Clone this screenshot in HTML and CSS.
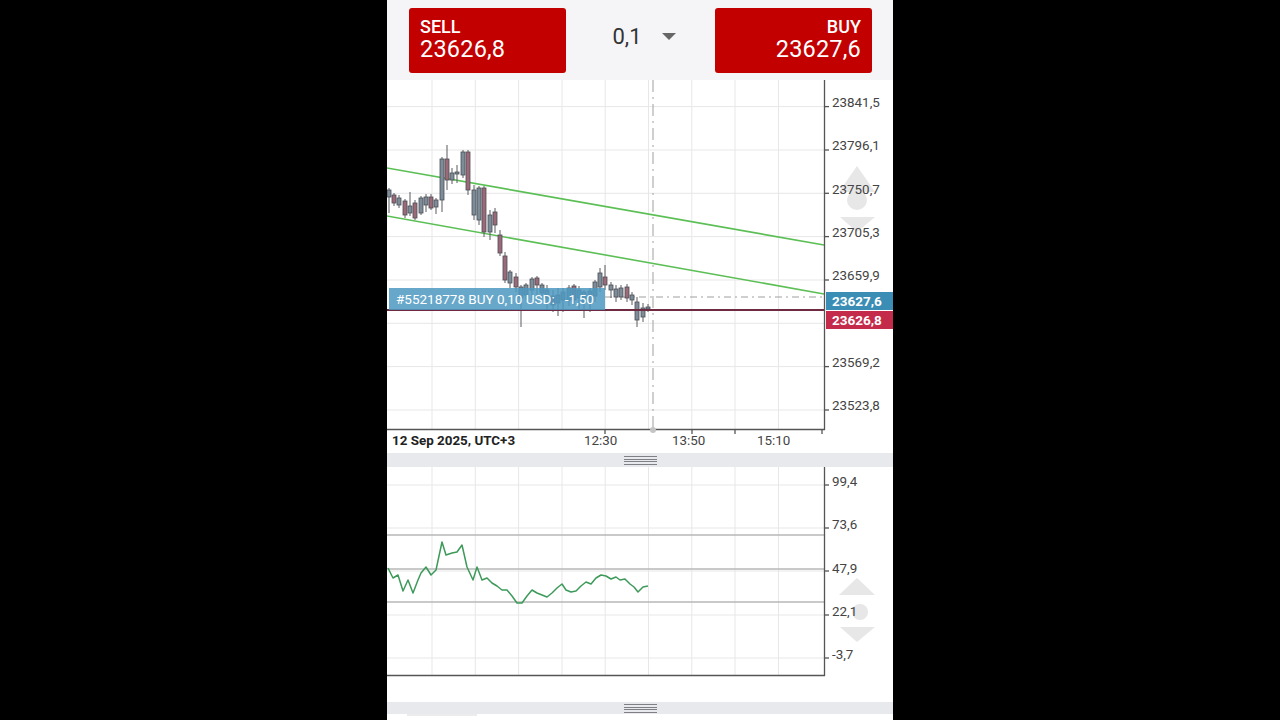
FILE: index.html
```html
<!DOCTYPE html>
<html lang="en">
<head>
<meta charset="utf-8">
<title>Trade chart</title>
<link rel="stylesheet" href="styles.css">
</head>
<body>
<div class="phone">
  <header class="topbar">
    <button class="trade sell"><span class="lbl">SELL</span><span class="px">23626,8</span></button>
    <div class="lot"><span>0,1</span><span class="caret"></span></div>
    <button class="trade buy"><span class="lbl">BUY</span><span class="px">23627,6</span></button>
  </header>

  <section class="chart">
    <svg class="plot" viewBox="387 80 506 373" width="506" height="373">
      <g class="grid">
        <line x1="432" y1="80" x2="432" y2="429"/><line x1="475.3" y1="80" x2="475.3" y2="429"/>
        <line x1="518.6" y1="80" x2="518.6" y2="429"/><line x1="562" y1="80" x2="562" y2="429"/>
        <line x1="605.2" y1="80" x2="605.2" y2="429"/><line x1="648.5" y1="80" x2="648.5" y2="429"/>
        <line x1="691.8" y1="80" x2="691.8" y2="429"/><line x1="735" y1="80" x2="735" y2="429"/>
        <line x1="778.5" y1="80" x2="778.5" y2="429"/>
        <line x1="387" y1="106.6" x2="824" y2="106.6"/><line x1="387" y1="150" x2="824" y2="150"/>
        <line x1="387" y1="193.3" x2="824" y2="193.3"/><line x1="387" y1="236.6" x2="824" y2="236.6"/>
        <line x1="387" y1="280" x2="824" y2="280"/><line x1="387" y1="323.3" x2="824" y2="323.3"/>
        <line x1="387" y1="366.6" x2="824" y2="366.6"/><line x1="387" y1="410" x2="824" y2="410"/>
      </g>
      <g class="ghost">
        <polygon points="857,166 839,192 875,192"/>
        <circle cx="857" cy="200" r="10"/>
        <polygon points="840,217 875,217 857,232"/>
      </g>
      <line class="cross" x1="653" y1="80" x2="653" y2="429"/>
      <line class="trend" x1="387" y1="168" x2="824" y2="245"/>
      <line class="trend" x1="387" y1="216" x2="824" y2="294"/>
      <line class="askline" x1="605" y1="297" x2="824" y2="297"/>
      <g class="candles">
        <line x1="389" y1="188" x2="389" y2="213"/><rect class="u" x="387" y="190" width="4" height="7"/>
        <line x1="394" y1="193" x2="394" y2="206"/><rect class="b" x="392" y="195" width="4" height="8"/>
        <line x1="399" y1="195" x2="399" y2="208"/><rect class="u" x="397" y="198" width="4" height="7"/>
        <line x1="405" y1="199" x2="405" y2="218"/><rect class="b" x="403" y="201" width="4" height="14"/>
        <line x1="410" y1="192" x2="410" y2="216"/><rect class="u" x="408" y="206" width="4" height="7"/>
        <line x1="415" y1="200" x2="415" y2="220"/><rect class="b" x="413" y="203" width="4" height="15"/>
        <line x1="421" y1="196" x2="421" y2="215"/><rect class="u" x="419" y="198" width="4" height="15"/>
        <line x1="426" y1="194" x2="426" y2="212"/><rect class="u" x="424" y="197" width="4" height="8"/>
        <line x1="431" y1="194" x2="431" y2="210"/><rect class="b" x="429" y="197" width="4" height="11"/>
        <line x1="436" y1="198" x2="436" y2="214"/><rect class="u" x="434" y="200" width="4" height="7"/>
        <line x1="442" y1="157" x2="442" y2="212"/><rect class="u" x="440" y="159" width="4" height="41"/>
        <line x1="447" y1="145" x2="447" y2="190"/><rect class="b" x="445" y="159" width="4" height="21"/>
        <line x1="452" y1="168" x2="452" y2="184"/><rect class="u" x="450" y="173" width="4" height="7"/>
        <line x1="457" y1="165" x2="457" y2="183"/><rect class="u" x="455" y="172" width="4" height="2"/>
        <line x1="463" y1="150" x2="463" y2="178"/><rect class="u" x="461" y="152" width="4" height="23"/>
        <line x1="468" y1="150" x2="468" y2="195"/><rect class="b" x="466" y="152" width="4" height="38"/>
        <line x1="474" y1="185" x2="474" y2="220"/><rect class="u" x="472" y="190" width="4" height="25"/>
        <line x1="479" y1="186" x2="479" y2="225"/><rect class="u" x="477" y="188" width="4" height="32"/>
        <line x1="484" y1="186" x2="484" y2="237"/><rect class="b" x="482" y="188" width="4" height="44"/>
        <line x1="490" y1="210" x2="490" y2="240"/><rect class="u" x="488" y="215" width="4" height="17"/>
        <line x1="495" y1="208" x2="495" y2="233"/><rect class="b" x="493" y="212" width="4" height="13"/>
        <line x1="500" y1="230" x2="500" y2="256"/><rect class="b" x="498" y="235" width="4" height="18"/>
        <line x1="505" y1="252" x2="505" y2="283"/><rect class="b" x="503" y="256" width="4" height="24"/>
        <line x1="510" y1="270" x2="510" y2="288"/><rect class="u" x="508" y="272" width="4" height="11"/>
        <line x1="516" y1="273" x2="516" y2="292"/><rect class="b" x="514" y="277" width="4" height="10"/>
        <line x1="521" y1="285" x2="521" y2="327"/><rect class="u" x="519" y="287" width="4" height="11"/>
        <line x1="526" y1="283" x2="526" y2="300"/><rect class="u" x="524" y="285" width="4" height="10"/>
        <line x1="532" y1="277" x2="532" y2="300"/><rect class="u" x="530" y="279" width="4" height="11"/>
        <line x1="537" y1="276" x2="537" y2="303"/><rect class="b" x="535" y="278" width="4" height="7"/>
        <line x1="542" y1="283" x2="542" y2="298"/><rect class="u" x="540" y="285" width="4" height="8"/>
        <line x1="547" y1="285" x2="547" y2="310"/><rect class="u" x="545" y="290" width="4" height="8"/>
        <line x1="553" y1="290" x2="553" y2="312"/><rect class="b" x="551" y="296" width="4" height="9"/>
        <line x1="558" y1="288" x2="558" y2="316"/><rect class="u" x="556" y="295" width="4" height="8"/>
        <line x1="563" y1="288" x2="563" y2="312"/><rect class="u" x="561" y="292" width="4" height="8"/>
        <line x1="569" y1="285" x2="569" y2="306"/><rect class="u" x="567" y="288" width="4" height="12"/>
        <line x1="574" y1="284" x2="574" y2="305"/><rect class="b" x="572" y="286" width="4" height="14"/>
        <line x1="579" y1="286" x2="579" y2="310"/><rect class="u" x="577" y="290" width="4" height="8"/>
        <line x1="584" y1="290" x2="584" y2="318"/><rect class="u" x="582" y="292" width="4" height="10"/>
        <line x1="590" y1="288" x2="590" y2="312"/><rect class="u" x="588" y="291" width="4" height="9"/>
        <line x1="595" y1="280" x2="595" y2="302"/><rect class="u" x="593" y="282" width="4" height="14"/>
        <line x1="600" y1="268" x2="600" y2="292"/><rect class="u" x="598" y="273" width="4" height="14"/>
        <line x1="605" y1="265" x2="605" y2="290"/><rect class="b" x="603" y="277" width="4" height="8"/>
        <line x1="611" y1="282" x2="611" y2="298"/><rect class="u" x="609" y="285" width="4" height="5"/>
        <line x1="616" y1="285" x2="616" y2="302"/><rect class="u" x="614" y="289" width="4" height="8"/>
        <line x1="621" y1="285" x2="621" y2="300"/><rect class="u" x="619" y="288" width="4" height="9"/>
        <line x1="627" y1="284" x2="627" y2="302"/><rect class="b" x="625" y="287" width="4" height="11"/>
        <line x1="632" y1="292" x2="632" y2="305"/><rect class="u" x="630" y="295" width="4" height="5"/>
        <line x1="637" y1="297" x2="637" y2="327"/><rect class="u" x="635" y="302" width="4" height="18"/>
        <line x1="643" y1="303" x2="643" y2="322"/><rect class="u" x="641" y="308" width="4" height="9"/>
        <line x1="648" y1="304" x2="648" y2="312"/><rect class="u" x="646" y="307" width="4" height="2"/>
      </g>
      <line class="posline" x1="387" y1="310" x2="824" y2="310"/>
      <g class="axis">
        <line x1="824.5" y1="80" x2="824.5" y2="430"/>
        <line x1="387" y1="429.5" x2="825" y2="429.5"/>
        <line x1="825" y1="106.6" x2="829" y2="106.6"/><line x1="825" y1="150" x2="829" y2="150"/>
        <line x1="825" y1="193.3" x2="829" y2="193.3"/><line x1="825" y1="236.6" x2="829" y2="236.6"/>
        <line x1="825" y1="280" x2="829" y2="280"/><line x1="825" y1="366.6" x2="829" y2="366.6"/>
        <line x1="825" y1="410" x2="829" y2="410"/>
        <line x1="605" y1="430" x2="605" y2="434"/><line x1="692" y1="430" x2="692" y2="434"/>
        <line x1="735" y1="430" x2="735" y2="434"/><line x1="822" y1="430" x2="822" y2="434"/>
      </g>
      <circle class="crossdot" cx="653" cy="430" r="3"/>
    </svg>

    <div class="price-axis">
      <span>23841,5</span><span>23796,1</span><span>23750,7</span><span>23705,3</span>
      <span>23659,9</span><span>23614,5</span><span>23569,2</span><span>23523,8</span>
    </div>
    <div class="time-axis">
      <span class="t-date">12 Sep 2025, UTC+3</span>
      <span class="t t1">12:30</span>
      <span class="t t2">13:50</span>
      <span class="t t3">15:10</span>
    </div>
    <div class="pos-label">#55218778 BUY 0,10 USD:&nbsp;&nbsp; -1,50</div>
    <div class="tag ask">23627,6</div>
    <div class="tag bid">23626,8</div>
  </section>

  <div class="splitter"><span class="grip"></span></div>

  <section class="sub">
    <svg class="plot" viewBox="387 467 506 235" width="506" height="235">
      <g class="grid">
        <line x1="432" y1="467" x2="432" y2="675"/><line x1="475.3" y1="467" x2="475.3" y2="675"/>
        <line x1="518.6" y1="467" x2="518.6" y2="675"/><line x1="562" y1="467" x2="562" y2="675"/>
        <line x1="605.2" y1="467" x2="605.2" y2="675"/><line x1="648.5" y1="467" x2="648.5" y2="675"/>
        <line x1="691.8" y1="467" x2="691.8" y2="675"/><line x1="735" y1="467" x2="735" y2="675"/>
        <line x1="778.5" y1="467" x2="778.5" y2="675"/>
        <line x1="387" y1="485" x2="824" y2="485"/><line x1="387" y1="528" x2="824" y2="528"/>
        <line x1="387" y1="571" x2="824" y2="571"/><line x1="387" y1="615" x2="824" y2="615"/>
        <line x1="387" y1="658" x2="824" y2="658"/>
      </g>
      <g class="levels">
        <line x1="387" y1="535" x2="824" y2="535"/>
        <line x1="387" y1="569" x2="824" y2="569"/>
        <line x1="387" y1="602" x2="824" y2="602"/>
      </g>
      <g class="ghost">
        <polygon points="857,578 839,595 875,595"/>
        <circle cx="860" cy="612" r="8"/>
        <polygon points="840,627 875,627 857,642"/>
      </g>
      <polyline class="rsi" points="388,568 393,578 398,575 403,591 408,580 413,593 418,580 421,573 426,567 431,575 436,570 442,542 446,555 452,553 457,552 462,545 467,567 473,580 477,567 482,580 487,578 492,583 497,586 502,590 507,590 512,596 517,603 522,603 527,596 532,590 537,593 542,595 547,597 552,593 557,588 562,584 566,590 571,592 576,591 581,586 586,582 591,584 596,578 601,575 606,576 611,579 616,577 620,580 625,579 630,584 634,587 638,592 643,587 648,586"/>
      <g class="axis">
        <line x1="824.5" y1="467" x2="824.5" y2="676"/>
        <line x1="387" y1="675.5" x2="825" y2="675.5"/>
        <line x1="825" y1="485" x2="829" y2="485"/><line x1="825" y1="528" x2="829" y2="528"/>
        <line x1="825" y1="571" x2="829" y2="571"/><line x1="825" y1="615" x2="829" y2="615"/>
        <line x1="825" y1="658" x2="829" y2="658"/>
      </g>
    </svg>
    <div class="sub-axis">
      <span>99,4</span><span>73,6</span><span>47,9</span><span>22,1</span><span>-3,7</span>
    </div>
  </section>

  <div class="splitter thin"><span class="grip"></span></div>
  <div class="rest"><span class="rest-bar"></span></div>
</div>
</body>
</html>
```

FILE: styles.css
```css
html, body {
  margin: 0;
  padding: 0;
  background: #000;
  font-family: Roboto, "Liberation Sans", Arial, sans-serif;
}

.phone {
  width: 506px;
  height: 720px;
  margin: 0 auto;
  background: #fff;
  overflow: hidden;
}

/* ---------- top bar ---------- */
.topbar {
  height: 80px;
  box-sizing: border-box;
  padding: 8px 21px 0 22px;
  background: #f5f5f7;
  display: flex;
  justify-content: space-between;
  align-items: flex-start;
}

.trade {
  width: 157px;
  height: 65px;
  box-sizing: border-box;
  border: 0;
  border-radius: 3px;
  background: #c30000;
  color: #fff;
  font-family: inherit;
  display: flex;
  flex-direction: column;
  padding: 10px 11px 0 11px;
  cursor: pointer;
}
.sell { align-items: flex-start; }
.buy { align-items: flex-end; padding-right: 11px; }

.lbl {
  font-size: 18px;
  font-weight: 500;
  line-height: 18px;
}
.px {
  font-size: 23.5px;
  line-height: 26px;
  letter-spacing: 0.2px;
}

.lot {
  margin-top: 16px;
  padding-left: 7px;
  display: flex;
  align-items: center;
  gap: 20px;
  font-size: 22px;
  color: #333;
}
.caret {
  width: 0;
  height: 0;
  border-left: 7px solid transparent;
  border-right: 7px solid transparent;
  border-top: 7px solid #666;
}

/* ---------- charts ---------- */
.chart {
  position: relative;
  height: 373px;
  background: #fff;
}
.sub {
  position: relative;
  height: 235px;
  background: #fff;
}
.plot {
  display: block;
}

.grid line { stroke: #e7e7e9; stroke-width: 1; }
.levels line { stroke: #b7b7b7; stroke-width: 1.3; }
.axis line { stroke: #555; stroke-width: 1.3; }
.ghost { fill: #e3e3e3; opacity: 0.85; }
.cross { stroke: #b0b0b0; stroke-width: 1.2; stroke-dasharray: 12 5 2 5; }
.crossdot { fill: #c4c4c4; }
.trend { stroke: #5cbf55; stroke-width: 1.6; }
.askline { stroke: #a0a0a0; stroke-width: 1.2; stroke-dasharray: 7 4 2 4; }
.posline { stroke: #6e2a40; stroke-width: 2; }
.candles line { stroke: #5a5a5e; stroke-width: 1; }
.candles rect { stroke: #4b4e55; stroke-width: 0.8; }
.candles .u { fill: #7c8c99; }
.candles .b { fill: #9b6a78; }
.rsi { fill: none; stroke: #3d9a5a; stroke-width: 1.5; stroke-linejoin: round; }

.price-axis {
  position: absolute;
  left: 445px;
  top: 1px;
  display: flex;
  flex-direction: column;
  font-size: 13.4px;
  color: #444;
}
.price-axis span,
.sub-axis span {
  height: 43.33px;
  line-height: 43.33px;
}

.sub-axis {
  position: absolute;
  left: 445px;
  top: -7px;
  display: flex;
  flex-direction: column;
  font-size: 13.4px;
  color: #444;
}

.time-axis {
  position: absolute;
  left: 0;
  right: 0;
  top: 349px;
  height: 24px;
  font-size: 13.4px;
  line-height: 24px;
  color: #444;
}
.time-axis span { position: absolute; top: 0; }
.t-date { left: 5px; font-weight: 700; color: #222; }
.t1 { left: 197px; }
.t2 { left: 285px; }
.t3 { left: 370px; }

.pos-label {
  position: absolute;
  left: 2px;
  top: 208px;
  width: 216px;
  height: 22px;
  box-sizing: border-box;
  padding-left: 7px;
  background: rgba(78, 152, 192, 0.86);
  color: #fff;
  font-size: 13.5px;
  line-height: 22px;
  white-space: nowrap;
  overflow: hidden;
}

.tag {
  position: absolute;
  left: 439px;
  width: 67px;
  height: 18px;
  box-sizing: border-box;
  padding-left: 6px;
  color: #fff;
  font-size: 13.5px;
  font-weight: 700;
  line-height: 18px;
}
.ask { top: 212px; background: #3a8db4; }
.bid { top: 231px; background: #c42a4a; }

/* ---------- splitters ---------- */
.splitter {
  height: 14px;
  background: #e8e9ec;
  display: flex;
  justify-content: center;
  align-items: center;
}
.splitter.thin { height: 12px; }
.grip {
  width: 33px;
  height: 9px;
  background: repeating-linear-gradient(#7f7f85 0 1.2px, transparent 1.2px 2.6px);
}

.rest {
  height: 6px;
  background: #fff;
  display: flex;
  padding-left: 20px;
}
.rest-bar {
  width: 70px;
  height: 2px;
  background: #ececec;
}
```
